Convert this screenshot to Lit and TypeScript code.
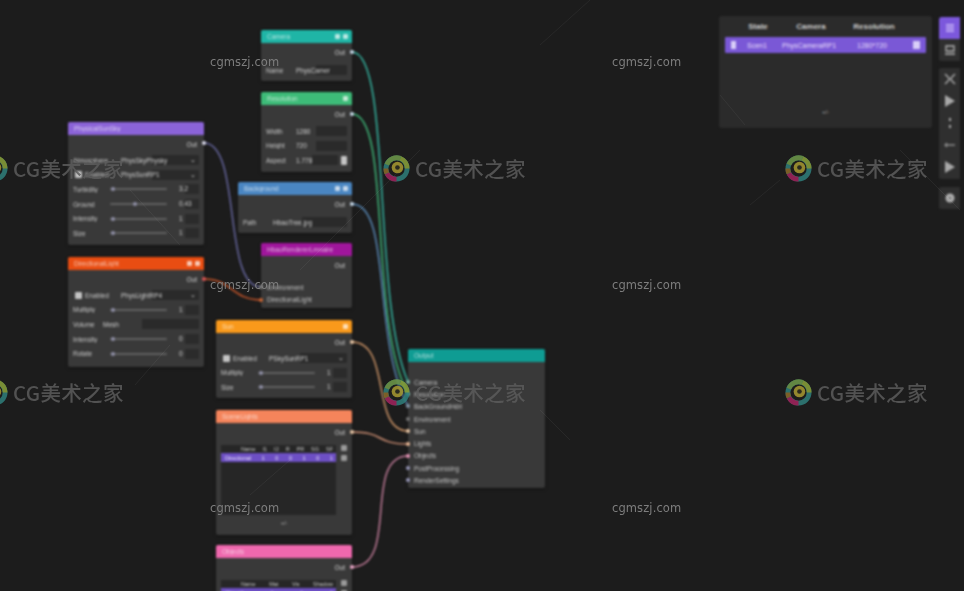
import { LitElement, html, css, svg } from "lit";
import { customElement } from "lit/decorators.js";

type Row =
  | { k: "out"; t?: string }
  | { k: "gap"; h: number }
  | { k: "select"; check?: boolean; label?: string; value: string }
  | { k: "slider"; label: string; pos: number; value: string }
  | { k: "field"; label: string; value: string; icon?: boolean }
  | { k: "input"; label: string }
  | { k: "table"; head: string[]; row: string[]; h: number; foot?: string };

interface N { x: number; y: number; w: number; h: number; title: string; color: string; icons?: number; rows: Row[]; }

const nodes: N[] = [
  { x: 261, y: 30, w: 91, h: 51, title: "Camera", color: "#1fb5a6", icons: 2, rows: [
    { k: "out" }, { k: "gap", h: 4 }, { k: "field", label: "Name", value: "PhysCamer" } ] },
  { x: 261, y: 92, w: 91, h: 80, title: "Resolution", color: "#3dbb78", icons: 1, rows: [
    { k: "out" }, { k: "gap", h: 3 }, { k: "field", label: "Width", value: "1280" }, { k: "field", label: "Height", value: "720" }, { k: "field", label: "Aspect", value: "1.778", icon: true } ] },
  { x: 238, y: 182, w: 114, h: 51, title: "Background", color: "#4a86c2", icons: 2, rows: [
    { k: "out" }, { k: "gap", h: 4 }, { k: "field", label: "Path", value: "HbaoTree.jpg" } ] },
  { x: 261, y: 243, w: 91, h: 65, title: "HbaoRendererLmnaire", color: "#a0169c", rows: [
    { k: "out" }, { k: "gap", h: 9 }, { k: "input", label: "Environment" }, { k: "input", label: "DirectionalLight" } ] },
  { x: 68, y: 122, w: 136, h: 123, title: "PhysicalSunSky", color: "#8b63d8", rows: [
    { k: "out" }, { k: "gap", h: 2 }, { k: "select", label: "Atmosphere", value: "PhysSkyPhysky" }, { k: "select", check: true, label: "Enabled", value: "PhysSunRP1" },
    { k: "slider", label: "Turbidity", pos: 0.02, value: "3.2" }, { k: "slider", label: "Ground", pos: 0.4, value: "0.43" }, { k: "slider", label: "Intensity", pos: 0.02, value: "1" }, { k: "slider", label: "Size", pos: 0.02, value: "1" } ] },
  { x: 68, y: 257, w: 136, h: 110, title: "DirectionalLight", color: "#e94d12", icons: 2, rows: [
    { k: "out" }, { k: "gap", h: 2 }, { k: "select", check: true, label: "Enabled", value: "PhysLightRP4" },
    { k: "slider", label: "Multiply", pos: 0.02, value: "1" }, { k: "field", label: "Volume", value: "Mesh" }, { k: "slider", label: "Intensity", pos: 0.02, value: "0" }, { k: "slider", label: "Rotate", pos: 0.02, value: "0" } ] },
  { x: 216, y: 320, w: 136, h: 78, title: "Sun", color: "#f9991b", icons: 1, rows: [
    { k: "out" }, { k: "gap", h: 2 }, { k: "select", check: true, label: "Enabled", value: "PSkySunRP1" },
    { k: "slider", label: "Multiply", pos: 0.02, value: "1" }, { k: "slider", label: "Size", pos: 0.02, value: "1" } ] },
  { x: 216, y: 410, w: 136, h: 125, title: "SceneLights", color: "#f5845b", rows: [
    { k: "out" }, { k: "table", head: ["Name", "I1", "I2", "R", "PR", "SG", "SF"], row: ["Directional", "1", "0", "0", "1", "0", "1"], h: 70, foot: "+/-" } ] },
  { x: 216, y: 545, w: 136, h: 70, title: "Objects", color: "#ef68ae", rows: [
    { k: "out" }, { k: "table", head: ["Name", "Mat", "Vis", "Shadow"], row: ["Object1", "1", "1", "1"], h: 40 } ] },
  { x: 408, y: 349, w: 137, h: 139, title: "Output", color: "#0f9c93", rows: [
    { k: "gap", h: 12 }, { k: "input", label: "Camera" }, { k: "input", label: "Resolution" }, { k: "input", label: "BackGroundHdri" }, { k: "input", label: "Environment" },
    { k: "input", label: "Sun" }, { k: "input", label: "Lights" }, { k: "input", label: "Objects" }, { k: "input", label: "PostProcessing" }, { k: "input", label: "RenderSettings" } ] },
];

const wires: [string, string][] = [
  ["M352 52 C392 52 372 300 408 382", "#35b8a4"],
  ["M352 114 C392 114 368 320 408 394", "#3fbb7c"],
  ["M352 204 C392 204 372 340 408 406", "#5a8cbc"],
  ["M204 143 C242 143 222 287 261 287", "#66669e"],
  ["M204 279 C232 279 232 300 261 300", "#c8562a"],
  ["M352 342 C392 342 370 431 408 431", "#cf9668"],
  ["M352 432 C385 432 375 444 408 444", "#cf9074"],
  ["M352 567 C400 567 362 456 408 456", "#c27c9a"],
];

const marks = [[210, 62], [612, 62], [210, 285], [612, 285], [210, 508], [612, 508]];
const logos = [[-19, 154], [383, 154], [785, 154], [-19, 378], [383, 378], [785, 378]];
const scratches = [[590, 0, 540, 45], [420, 150, 300, 270], [130, 190, 180, 245], [170, 345, 135, 385], [900, 150, 960, 210], [720, 95, 745, 125], [290, 460, 250, 495], [540, 410, 570, 440], [780, 180, 750, 205]];

@customElement("app-root")
export class AppRoot extends LitElement {
  static styles = css`
    :host { display: block; width: 964px; height: 591px; }
    .canvas { position: relative; width: 964px; height: 591px; overflow: hidden; background: #1c1c1c; font-family: "Liberation Sans", Arial, sans-serif; color: #d0d0d0; }
    .soft { position: absolute; inset: 0; filter: blur(0.9px); }
    .node { position: absolute; background: #393939; border-radius: 2px; box-sizing: border-box; display: flex; flex-direction: column; overflow: hidden; box-shadow: 0 1px 3px #0007; }
    .head { height: 13px; flex: none; display: flex; align-items: center; gap: 3px; padding: 0 4px 0 6px; font-size: 6.500px; color: #ffffffa8; }
    .head span { flex: 1; white-space: nowrap; overflow: hidden; }
    .head i { width: 5px; height: 5px; background: #ffffffb0; border-radius: 1px; }
    .body { display: flex; flex-direction: column; padding: 2px 5px 0; flex: 1; min-height: 0; }
    .row { height: 14.600px; flex: none; display: flex; align-items: center; font-size: 6.500px; gap: 3px; white-space: nowrap; }
    .out { justify-content: flex-end; height: 14px; padding-right: 2px; }
    .lab { width: 30px; flex: none; overflow: hidden; color: #cacaca; }
    .flab { width: 24px; }
    .slab { width: 34px; }
    .box { flex: 1; height: 10px; background: #2b2b2b; border-radius: 1px; display: flex; align-items: center; justify-content: space-between; padding: 0 3px; min-width: 0; overflow: hidden; }
    .plain { background: linear-gradient(90deg, #393939 42%, #2a2a2a 42%); }
    .check { width: 7px; height: 7px; flex: none; background: #c4c4c4; border-radius: 1px; margin-left: 2px; }
    .nocheck { width: 42px; }
    .track { flex: 1; height: 2px; background: #606060; position: relative; border-radius: 1px; margin-right: 6px; }
    .knob { position: absolute; top: -1px; width: 4px; height: 4px; border-radius: 50%; background: #9090a8; }
    .val { width: 23px; height: 10px; flex: none; background: linear-gradient(90deg, #393939 40%, #2b2b2b 40%); line-height: 10px; overflow: hidden; padding-left: 3px; box-sizing: border-box; }
    .pad { width: 6px; height: 9px; flex: none; background: #c4c4c4; border-radius: 1px; }
    .input { height: 12.300px; padding-left: 1px; color: #c4c4c4; }
    .tablewrap { display: flex; gap: 5px; padding-top: 6px; }
    .table { flex: 1; min-width: 0; background: #262626; font-size: 5.500px; }
    .thead, .trow { display: flex; justify-content: space-between; align-items: center; height: 8px; padding: 0 3px 0 20px; color: #cacaca; }
    .trow { background: #6d4fc4; height: 9px; padding-left: 4px; color: #ece8fb; }
    .side { width: 6px; flex: none; display: flex; flex-direction: column; gap: 4px; padding-top: 0; }
    .side i { width: 6px; height: 6px; background: #9a9a9a; border-radius: 1px; }
    .foot { text-align: center; font-size: 6px; padding-top: 5px; color: #aaa; }
    svg.layer { position: absolute; inset: 0; width: 964px; height: 591px; pointer-events: none; }
    .dock { position: absolute; left: 719px; top: 16px; width: 213px; height: 112px; background: #2b2b2b; border-radius: 3px; display: flex; flex-direction: column; padding: 0 6px; box-sizing: border-box; align-items: stretch; }
    .dhead, .drow { display: grid; align-items: center; flex: none; }
    .dhead { height: 21px; font-size: 8px; font-weight: 700; color: #cfcfcf; text-align: center; padding-left: 8px; grid-template-columns: 50px 56px 70px; }
    .drow { height: 16px; background: #7a58d6; border-radius: 1px; color: #e6dffc; font-size: 7px; padding: 0 6px; grid-template-columns: 16px 35px 75px 52px 1fr; white-space: nowrap; }
    .doc { width: 5px; height: 8px; background: #d9cef8; }
    .bin { width: 7px; height: 8px; background: #d9cef8; justify-self: end; }
    .grow { flex: 1; }
    .dfoot { height: 16px; text-align: center; font-size: 6px; color: #aaa; margin-bottom: 3px; }
    .tools { position: absolute; left: 939px; top: 17px; width: 21px; display: flex; flex-direction: column; }
    .tgroup { background: #2f2f2f; display: flex; flex-direction: column; align-items: center; border-radius: 2px 0 0 2px; }
    .tbtn { width: 21px; height: 22px; display: flex; align-items: center; justify-content: center; }
    .sel { background: #7c58dc; border-radius: 3px 0 0 0; }
    .tgroup svg { width: 12px; height: 12px; display: block; }
    .mid { margin-top: 7px; height: 110px; justify-content: space-between; padding: 0 0 1px; }
    .mid .tbtn { height: 21.600px; }
    .last { margin-top: 8px; }
    .mark { position: absolute; font-size: 11.500px; letter-spacing: 0.100px; color: #7e7e7e; font-family: "DejaVu Sans", sans-serif; line-height: 14px; transform: translateY(-7px); }
    .logo { position: absolute; display: flex; align-items: center; gap: 5px; height: 28px; opacity: 0.85; }
    .logo svg { width: 27px; height: 27px; flex: none; }
    .logo span { font-family: "Noto Sans CJK SC", sans-serif; font-size: 20.500px; font-weight: 500; line-height: 28px; color: #5c5c5c; white-space: nowrap; letter-spacing: 0.300px; }
  `;

  private rowT(r: Row) {
    switch (r.k) {
      case "out": return html`<div class="row out">${r.t ?? "Out"}</div>`;
      case "gap": return html`<div style="height:${r.h}px;flex:none"></div>`;
      case "input": return html`<div class="row input">${r.label}</div>`;
      case "select": return html`<div class="row">${r.check ? html`<b class="check"></b>` : ""}<div class="lab ${r.check ? "" : "nocheck"}">${r.label}</div><div class="box plain"><span>${r.value}</span><span>⌄</span></div></div>`;
      case "slider": return html`<div class="row"><div class="lab slab">${r.label}</div><div class="track"><b class="knob" style="left:${r.pos * 100}%"></b></div><div class="val">${r.value}</div></div>`;
      case "field": return html`<div class="row"><div class="lab flab">${r.label}</div><div class="box plain"><span>${r.value}</span></div>${r.icon ? html`<b class="pad"></b>` : ""}</div>`;
      case "table": return html`<div class="tablewrap"><div class="table" style="height:${r.h}px"><div class="thead">${r.head.map((h) => html`<span>${h}</span>`)}</div><div class="trow">${r.row.map((h) => html`<span>${h}</span>`)}</div></div><div class="side"><i></i><i></i></div></div>${r.foot ? html`<div class="foot">${r.foot}</div>` : ""}`;
    }
  }

  private logo() {
    return html`<svg viewBox="0 0 28 28" fill="none">
      <circle cx="14" cy="14" r="11" stroke="#2f7f7c" stroke-width="5"></circle>
      <path d="M4 10A11 11 0 0 1 18 3.500" stroke="#6f9a4a" stroke-width="5"></path>
      <path d="M18 3.500A11 11 0 0 1 25 14" stroke="#8aa23a" stroke-width="5"></path>
      <path d="M4 19A11 11 0 0 0 14 25" stroke="#a3245f" stroke-width="5"></path>
      <path d="M3 14A11 11 0 0 0 4 19" stroke="#8c6a2a" stroke-width="5"></path>
      <circle cx="15" cy="13" r="6" fill="#a89a32"></circle>
      <circle cx="15" cy="13" r="2.400" fill="#2d2d20"></circle>
    </svg><span>CG美术之家</span>`;
  }

  render() {
    return html`<div class="canvas">
      <div class="soft">
        ${nodes.map((n) => html`<div class="node" style="left:${n.x}px;top:${n.y}px;width:${n.w}px;height:${n.h}px">
          <div class="head" style="background:${n.color}"><span>${n.title}</span>${Array.from({ length: n.icons ?? 0 }, () => html`<i></i>`)}</div>
          <div class="body">${n.rows.map((r) => this.rowT(r))}</div>
        </div>`)}
        <svg class="layer" viewBox="0 0 964 591" fill="none">
          ${wires.map(([d, c]) => svg`<path d=${d} stroke=${c} stroke-width="1.500"></path>`)}
          ${[[352, 52, "#cde"], [352, 114, "#cde"], [352, 204, "#cde"], [204, 143, "#dde"], [204, 279, "#d55"], [352, 342, "#eca"], [352, 432, "#eca"], [352, 567, "#eac"], [261, 287, "#888"], [261, 300, "#c63"],
            [408, 382, "#8ba"], [408, 394, "#8ba"], [408, 406, "#89a"], [408, 419, "#777"], [408, 431, "#eca"], [408, 444, "#eb9"], [408, 456, "#e9b"], [408, 468, "#99b"], [408, 480, "#99b"]].map(([x, y, c]) => svg`<circle cx=${x} cy=${y} r="2" fill=${c}></circle>`)}
        </svg>
        <div class="dock">
          <div class="dhead"><span>State</span><span>Camera</span><span>Resolution</span></div>
          <div class="drow"><b class="doc"></b><span>Scen1</span><span>PhysCameraRP1</span><span>1280*720</span><b class="bin"></b></div>
          <div class="grow"></div>
          <div class="dfoot">+/-</div>
        </div>
        <div class="tools">
          <div class="tgroup">
            <div class="tbtn sel"><svg viewBox="0 0 12 12" fill="none" stroke="#cfc0fa" stroke-width="1.500"><path d="M2 3h8M2 6h8M2 9h8"></path></svg></div>
            <div class="tbtn"><svg viewBox="0 0 12 12" fill="none" stroke="#b5b5b5" stroke-width="1.300"><path d="M2 2h8v5H2zM1 10h10"></path></svg></div>
          </div>
          <div class="tgroup mid">
            <div class="tbtn"><svg viewBox="0 0 12 12" fill="none" stroke="#a8a8a8" stroke-width="1.500"><path d="M1 1l4 4M11 1L7 5M1 11l4-4M11 11L7 7M4 6h4"></path></svg></div>
            <div class="tbtn"><svg viewBox="0 0 12 12" fill="#a8a8a8"><path d="M1 0l10 6-10 6z"></path></svg></div>
            <div class="tbtn"><svg viewBox="0 0 12 12" fill="#a8a8a8"><path d="M5 1h2v3H5zM5 8h2v3H5z"></path></svg></div>
            <div class="tbtn"><svg viewBox="0 0 12 12" fill="none" stroke="#8a8a8a" stroke-width="1.300"><path d="M1 6h10M3 4L1 6l2 2"></path></svg></div>
            <div class="tbtn"><svg viewBox="0 0 12 12" fill="#a8a8a8"><path d="M1 0l10 6-10 6z"></path></svg></div>
          </div>
          <div class="tgroup last">
            <div class="tbtn"><svg viewBox="0 0 12 12"><circle cx="6" cy="6" r="4.500" fill="#b0b0b0"></circle><circle cx="6" cy="6" r="1.500" fill="#777"></circle></svg></div>
          </div>
        </div>
      </div>
      <svg class="layer" viewBox="0 0 964 591" stroke="#ffffff12" stroke-width="0.800">
        ${scratches.map(([a, b, c, d]) => svg`<line x1=${a} y1=${b} x2=${c} y2=${d}></line>`)}
      </svg>
      ${marks.map(([x, y]) => html`<div class="mark" style="left:${x}px;top:${y}px">cgmszj.com</div>`)}
      ${logos.map(([x, y]) => html`<div class="logo" style="left:${x}px;top:${y}px">${this.logo()}</div>`)}
    </div>`;
  }
}
